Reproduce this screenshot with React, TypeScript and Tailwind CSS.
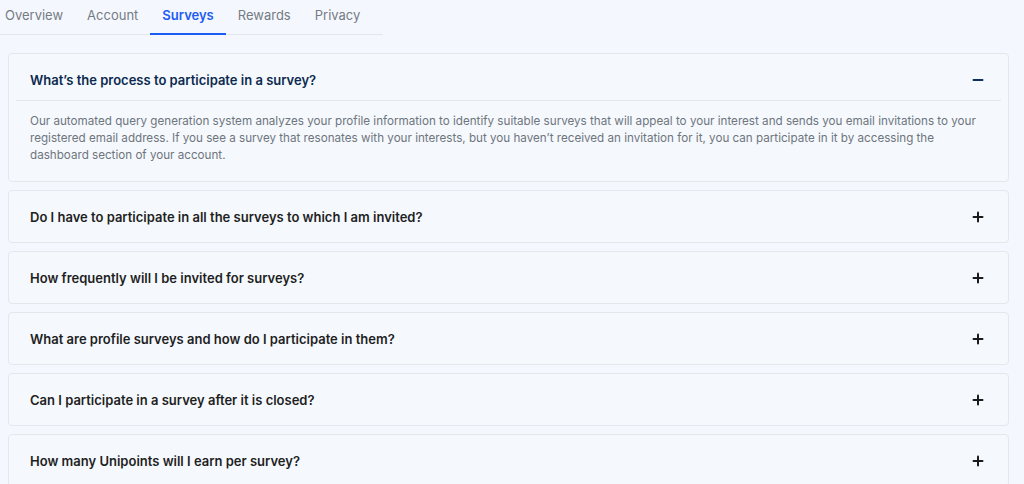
import { useState } from "react"

const tabs = ["Overview", "Account", "Surveys", "Rewards", "Privacy"]

const faqs = [
  {
    q: "What’s the process to participate in a survey?",
    a: "Our automated query generation system analyzes your profile information to identify suitable surveys that will appeal to your interest and sends you email invitations to your registered email address. If you see a survey that resonates with your interests, but you haven’t received an invitation for it, you can participate in it by accessing the dashboard section of your account.",
  },
  { q: "Do I have to participate in all the surveys to which I am invited?", a: "" },
  { q: "How frequently will I be invited for surveys?", a: "" },
  { q: "What are profile surveys and how do I participate in them?", a: "" },
  { q: "Can I participate in a survey after it is closed?", a: "" },
  { q: "How many Unipoints will I earn per survey?", a: "" },
]

function PlusMinus({ open }: { open: boolean }) {
  return (
    <svg width="12" height="12" viewBox="0 0 12 12" className={open ? "text-[#0b2f5e]" : "text-[#1a1a1a]"}>
      <path d="M1.5 6h9" stroke="currentColor" strokeWidth="2" strokeLinecap="round" />
      {!open && <path d="M6 1.5v9" stroke="currentColor" strokeWidth="2" strokeLinecap="round" />}
    </svg>
  )
}

export default function App() {
  const [activeTab, setActiveTab] = useState("Surveys")
  const [openIndex, setOpenIndex] = useState<number | null>(0)

  return (
    <div className="min-h-screen bg-[#f4f8fe] font-['Inter','Noto_Sans',sans-serif] overflow-hidden h-[484px]">
      <div className="flex w-[390px] border-b border-[#e3e6ea] -ml-[7px]">
        {tabs.map((t) => (
          <button
            key={t}
            onClick={() => setActiveTab(t)}
            className={
              "px-3 pt-[5px] pb-[8px] text-[13px] leading-[20px] border-b-2 -mb-px " +
              (activeTab === t
                ? "border-[#1d5cf2] text-[#1d5cf2] font-semibold"
                : "border-transparent text-[#757b83]")
            }
          >
            {t}
          </button>
        ))}
      </div>

      <div className="px-2 pt-[18px] flex flex-col gap-2 w-[1017px]">
        {faqs.map((f, i) => {
          const open = openIndex === i
          return (
            <div key={i} className="border border-[#e4e7eb] rounded-[4px] bg-[#f5f9fe]">
              <button
                onClick={() => setOpenIndex(open ? null : i)}
                className={
                  "w-full flex items-center justify-between pl-[21px] pr-[24px] text-left " +
                  (open ? "pt-[16px] pb-[10px]" : "pt-[16px] pb-[15px]")
                }
              >
                <span
                  className={
                    "text-[13px] leading-[20px] font-semibold " +
                    (open ? "text-[#0d2a4e]" : "text-[#1f1f1f]")
                  }
                >
                  {f.q}
                </span>
                <PlusMinus open={open} />
              </button>
              {open && (
                <>
                  <div className="mx-[7px] border-t border-[#e4e7eb]" />
                  <p className="pl-[21px] pr-[20px] pt-[12px] pb-[17px] text-[11.65px] leading-[17px] text-[#6f757d]">
                    {f.a}
                  </p>
                </>
              )}
            </div>
          )
        })}
      </div>
    </div>
  )
}
